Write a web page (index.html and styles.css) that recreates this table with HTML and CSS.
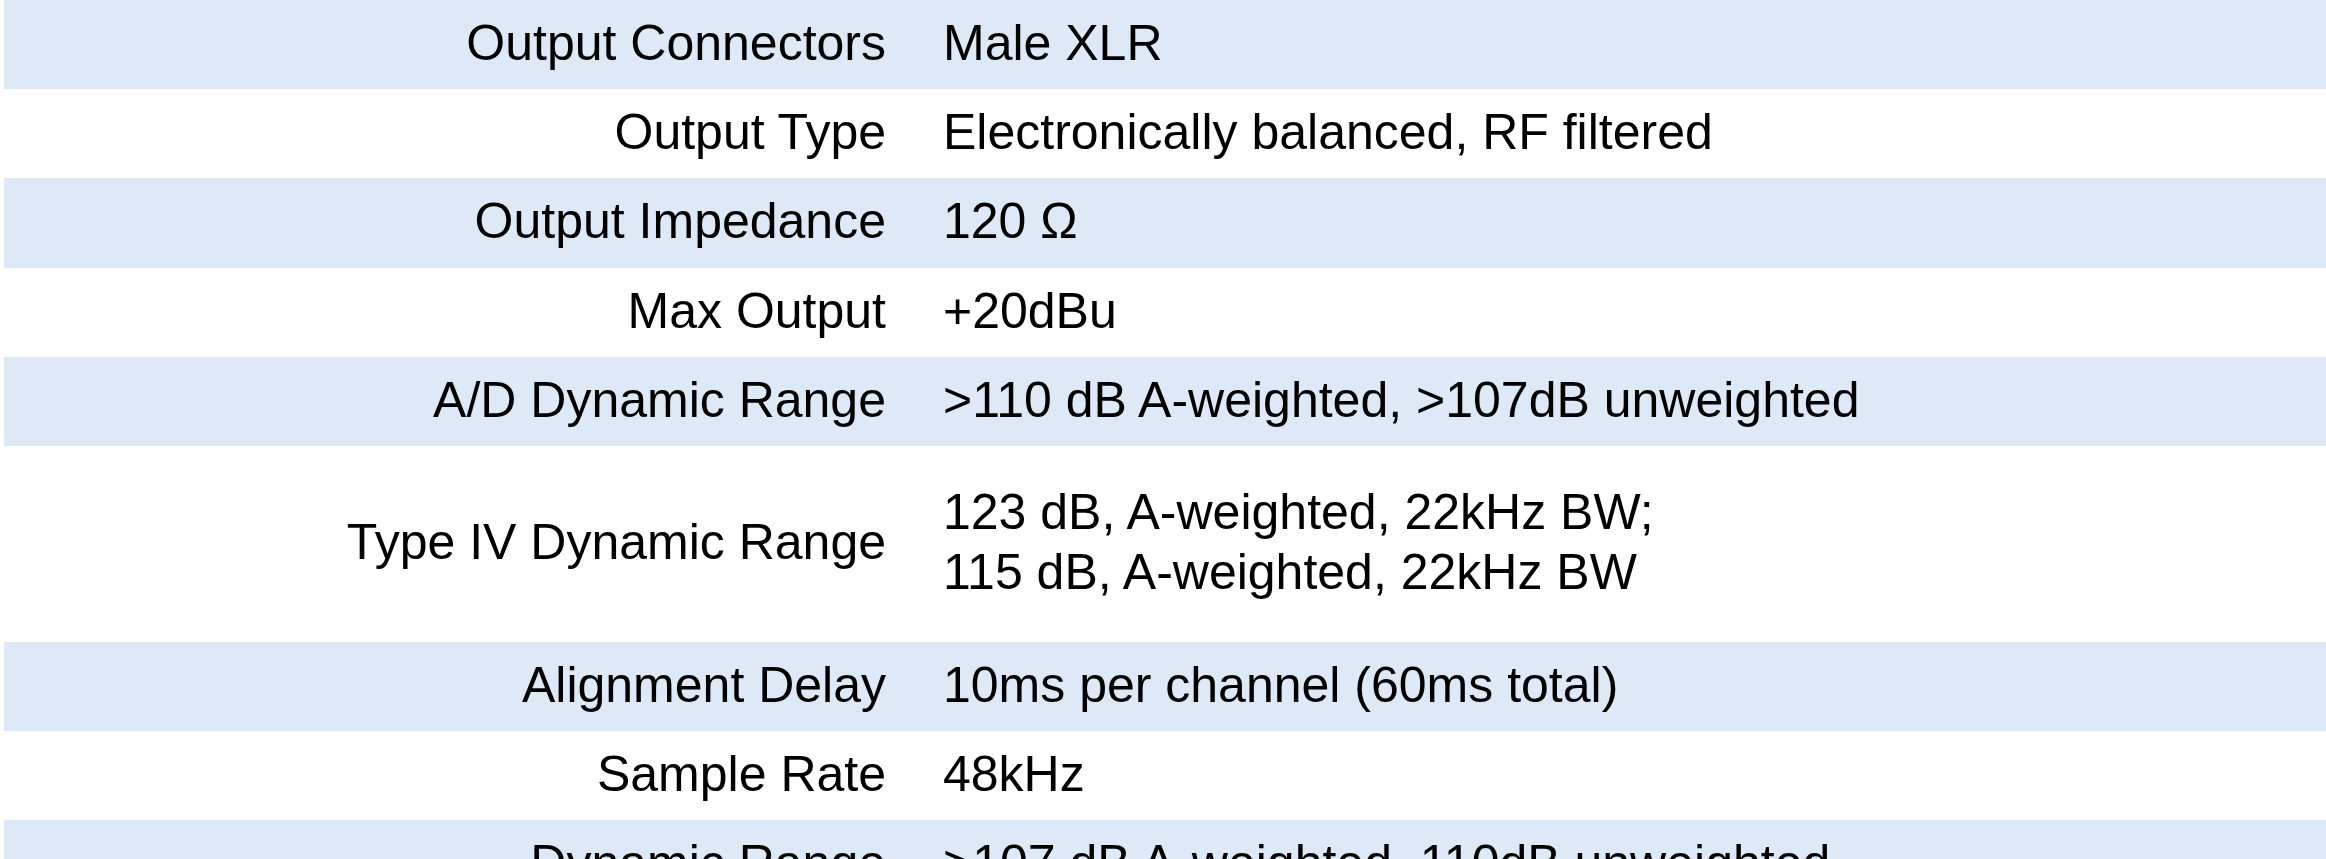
FILE: index.html
```html
<!DOCTYPE html>
<html>
<head>
<meta charset="utf-8">
<link rel="stylesheet" href="styles.css">
</head>
<body>
<div class="spec">
  <div class="row alt"><div class="label">Output Connectors</div><div class="value">Male XLR</div></div>
  <div class="row"><div class="label">Output Type</div><div class="value">Electronically balanced, RF filtered</div></div>
  <div class="row alt"><div class="label">Output Impedance</div><div class="value">120 Ω</div></div>
  <div class="row"><div class="label">Max Output</div><div class="value">+20dBu</div></div>
  <div class="row alt"><div class="label">A/D Dynamic Range</div><div class="value">&gt;110 dB A-weighted, &gt;107dB unweighted</div></div>
  <div class="row tall"><div class="label">Type IV Dynamic Range</div><div class="value">123 dB, A-weighted, 22kHz BW;<br>115 dB, A-weighted, 22kHz BW</div></div>
  <div class="row alt"><div class="label">Alignment Delay</div><div class="value">10ms per channel (60ms total)</div></div>
  <div class="row"><div class="label">Sample Rate</div><div class="value">48kHz</div></div>
  <div class="row alt"><div class="label">Dynamic Range</div><div class="value">&gt;107 dB A-weighted, 110dB unweighted</div></div>
</div>
</body>
</html>
```
FILE: styles.css
```css
html, body {
  margin: 0;
  padding: 0;
  background: #ffffff;
  overflow: hidden;
}
.spec {
  margin-left: 4px;
  font-family: "Liberation Sans", Arial, sans-serif;
  font-size: 50px;
  line-height: 60px;
  color: #000;
}
.row {
  display: grid;
  grid-template-columns: 908px 1fr;
  align-items: center;
  height: 89.2px;
}
.row.tall {
  height: 196px;
}
.row.alt {
  background: #dde9f6;
}
.label {
  text-align: right;
  padding-right: 26px;
  padding-bottom: 3px;
  white-space: nowrap;
}
.value {
  padding-left: 31px;
  padding-bottom: 3px;
  white-space: nowrap;
}
```
